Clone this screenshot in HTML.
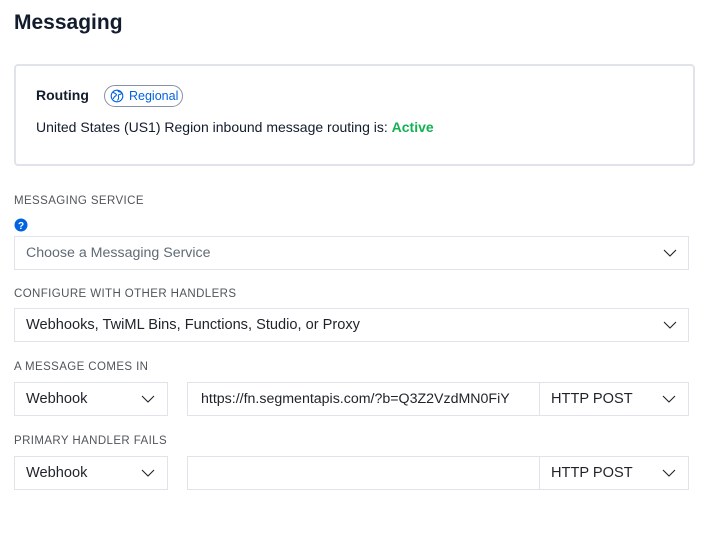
<!DOCTYPE html>
<html><head><style>
*{box-sizing:border-box;margin:0;padding:0}
body{width:728px;height:541px;background:#fff;font-family:"Liberation Sans",sans-serif;color:#121c2d;position:relative;overflow:hidden}
.a{position:absolute}
h1{position:absolute;left:14px;top:11px;font-size:21px;font-weight:bold;color:#121c2d}
.card{left:14px;top:64px;width:681px;height:102px;border:2px solid #e1e3ea;border-radius:4px}
.lbl{position:absolute;left:14px;font-size:11.5px;letter-spacing:0.4px;color:#50555c;font-weight:500}
.box{position:absolute;height:34px;border:1px solid #e1e3ea;background:#fff;font-size:14.6px;color:#1f2329;padding-left:11px;line-height:32px;white-space:nowrap;overflow:hidden}
.chev{position:absolute;top:12px;width:14px;height:8px}
</style></head><body>
<h1>Messaging</h1>
<div class="a card"></div>
<div class="a" style="left:36px;top:87px;font-size:14px;font-weight:bold">Routing</div>
<div class="a" style="left:104px;top:85px;width:79px;height:22px;border:1px solid #8891aa;border-radius:11px;font-size:12.5px;color:#0263e0;line-height:20px;padding-left:24px">Regional
<svg class="a" style="left:5px;top:3px" width="14" height="14" viewBox="0 0 14 14" fill="none" stroke="#0263e0" stroke-width="1.1"><circle cx="7" cy="7" r="5.8"/><path d="M3 3.5c1.5 0 2 1 3 1.5s0 2-1 2.3-1 2-2 2.5M8 1.5c0 1 1 1.5 2 1.5s2 1 1 2-2 0-2.5 1 .5 2 0 3.5-1 1.5-1 2"/></svg></div>
<div class="a" style="left:36px;top:119px;font-size:14px">United States (US1) Region inbound message routing is: <b style="color:#14b053">Active</b></div>

<div class="lbl" style="top:195px">MESSAGING SERVICE</div>
<svg class="a" style="left:14px;top:218px" width="14" height="14" viewBox="0 0 14 14"><circle cx="7" cy="7" r="6.5" fill="#0263e0"/><text x="7" y="11" font-size="10" font-weight="bold" fill="#fff" text-anchor="middle" font-family="Liberation Sans">?</text></svg>
<div class="box" style="left:14px;top:236px;width:675px;color:#606b75;font-size:14.2px">Choose a Messaging Service<svg class="chev" style="left:648px" viewBox="0 0 14 8"><path d="M1 1l6 6 6-6" fill="none" stroke="#1f2329" stroke-width="1.1"/></svg></div>

<div class="lbl" style="top:288px">CONFIGURE WITH OTHER HANDLERS</div>
<div class="box" style="left:14px;top:308px;width:675px">Webhooks, TwiML Bins, Functions, Studio, or Proxy<svg class="chev" style="left:648px" viewBox="0 0 14 8"><path d="M1 1l6 6 6-6" fill="none" stroke="#1f2329" stroke-width="1.1"/></svg></div>

<div class="lbl" style="top:361px">A MESSAGE COMES IN</div>
<div class="box" style="left:14px;top:382px;width:154px">Webhook<svg class="chev" style="left:126px" viewBox="0 0 14 8"><path d="M1 1l6 6 6-6" fill="none" stroke="#1f2329" stroke-width="1.1"/></svg></div>
<div class="box" style="left:187px;top:382px;width:353px;padding-left:13px;font-size:14.2px">https://fn.segmentapis.com/?b=Q3Z2VzdMN0FiY</div>
<div class="box" style="left:539px;top:382px;width:150px">HTTP POST<svg class="chev" style="left:122px" viewBox="0 0 14 8"><path d="M1 1l6 6 6-6" fill="none" stroke="#1f2329" stroke-width="1.1"/></svg></div>

<div class="lbl" style="top:435px">PRIMARY HANDLER FAILS</div>
<div class="box" style="left:14px;top:456px;width:154px">Webhook<svg class="chev" style="left:126px" viewBox="0 0 14 8"><path d="M1 1l6 6 6-6" fill="none" stroke="#1f2329" stroke-width="1.1"/></svg></div>
<div class="box" style="left:187px;top:456px;width:353px"></div>
<div class="box" style="left:539px;top:456px;width:150px">HTTP POST<svg class="chev" style="left:122px" viewBox="0 0 14 8"><path d="M1 1l6 6 6-6" fill="none" stroke="#1f2329" stroke-width="1.1"/></svg></div>
</body></html>
